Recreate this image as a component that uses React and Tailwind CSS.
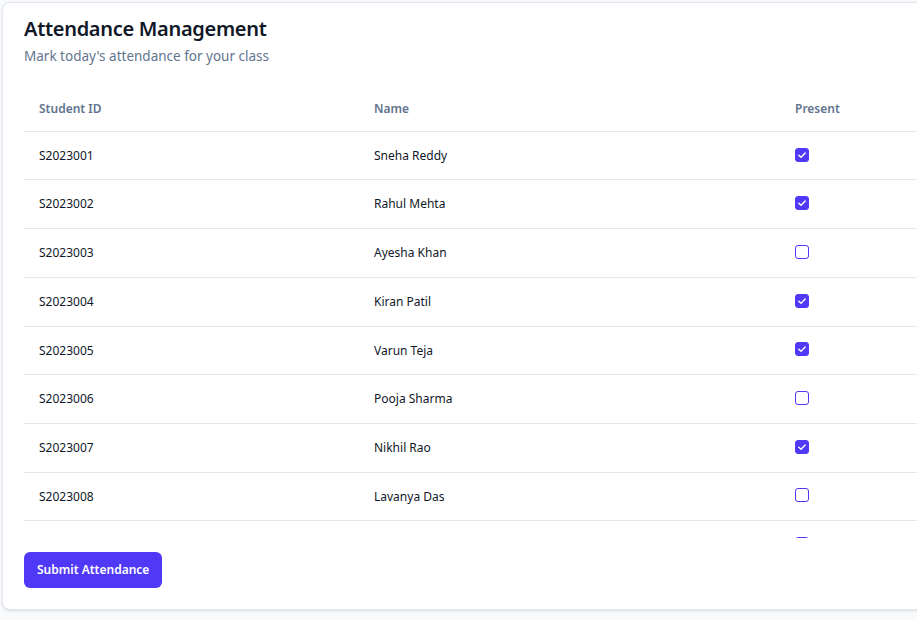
import React, { useState } from 'react';

const students = [
  { id: 'S2023001', name: 'Sneha Reddy', present: true },
  { id: 'S2023002', name: 'Rahul Mehta', present: true },
  { id: 'S2023003', name: 'Ayesha Khan', present: false },
  { id: 'S2023004', name: 'Kiran Patil', present: true },
  { id: 'S2023005', name: 'Varun Teja', present: true },
  { id: 'S2023006', name: 'Pooja Sharma', present: false },
  { id: 'S2023007', name: 'Nikhil Rao', present: true },
  { id: 'S2023008', name: 'Lavanya Das', present: false },
  { id: 'S2023009', name: 'Arjun Nair', present: false },
  { id: 'S2023010', name: 'Meera Iyer', present: true },
];

const Check = ({ checked, onChange }) => (
  <label className="relative -mt-0.5 block h-3.5 w-3.5 cursor-pointer">
    <input
      type="checkbox"
      checked={checked}
      onChange={onChange}
      className="peer block h-3.5 w-3.5 cursor-pointer appearance-none rounded-[3px] border border-indigo-600 bg-white checked:bg-indigo-600"
    />
    <svg
      viewBox="0 0 14 14"
      className="pointer-events-none absolute inset-0 hidden h-3.5 w-3.5 peer-checked:block"
      fill="none"
      stroke="white"
      strokeWidth="1.4"
      strokeLinecap="round"
      strokeLinejoin="round"
    >
      <path d="M3.8 7.3 L6 9.3 L10.2 4.9" />
    </svg>
  </label>
);

const App = () => {
  const [rows, setRows] = useState(students);

  const toggle = (id) => {
    setRows(rows.map((r) => (r.id === id ? { ...r, present: !r.present } : r)));
  };

  return (
    <div className="h-screen overflow-hidden bg-slate-50 p-0.5 font-['Noto_Sans',sans-serif]">
      <div className="w-[1000px] rounded-lg border border-slate-200 bg-white px-[21px] pt-3 pb-[21px] shadow-sm">
        <h1 className="text-[20px] font-semibold leading-7 tracking-[-0.3px] text-gray-900">Attendance Management</h1>
        <p className="mt-[3px] text-[13.5px] leading-5 text-slate-500">Mark today's attendance for your class</p>

        <div className="mt-[19px] h-[453px] overflow-y-auto">
          <table className="w-full table-fixed border-collapse text-left text-[12px] leading-[15.7px]">
            <thead>
              <tr className="border-b border-slate-200">
                <th className="w-[335px] px-[15px] pt-4 pb-3.5 font-semibold text-slate-500">Student ID</th>
                <th className="w-[421px] px-[15px] pt-4 pb-3.5 font-semibold text-slate-500">Name</th>
                <th className="px-[15px] pt-4 pb-3.5 font-semibold text-slate-500">Present</th>
              </tr>
            </thead>
            <tbody>
              {rows.map((s) => (
                <tr key={s.id} className="border-b border-slate-200">
                  <td className="px-[15px] py-4 text-gray-900">{s.id}</td>
                  <td className="px-[15px] py-4 text-gray-900">{s.name}</td>
                  <td className="px-[15px] py-4">
                    <Check checked={s.present} onChange={() => toggle(s.id)} />
                  </td>
                </tr>
              ))}
            </tbody>
          </table>
        </div>

        <button className="mt-3.5 h-9 rounded-md bg-indigo-600 px-[13px] text-[12px] font-semibold text-white">
          Submit Attendance
        </button>
      </div>
    </div>
  );
};

export default App;
